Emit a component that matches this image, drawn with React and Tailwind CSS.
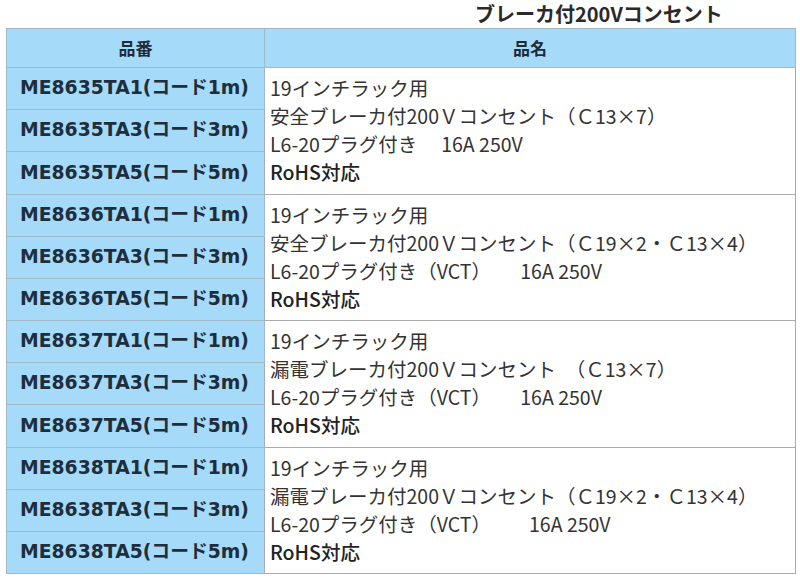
const groups = [
  {
    code: 'ME8635',
    lines: ['19インチラック用', '安全ブレーカ付200Ｖコンセント（Ｃ13×7）', 'L6-20プラグ付き　 16A 250V'],
  },
  {
    code: 'ME8636',
    lines: ['19インチラック用', '安全ブレーカ付200Ｖコンセント（Ｃ19×2・Ｃ13×4）', 'L6-20プラグ付き（VCT）　　16A 250V'],
  },
  {
    code: 'ME8637',
    lines: ['19インチラック用', '漏電ブレーカ付200Ｖコンセント　（Ｃ13×7）', 'L6-20プラグ付き（VCT）　　16A 250V'],
  },
  {
    code: 'ME8638',
    lines: ['19インチラック用', '漏電ブレーカ付200Ｖコンセント（Ｃ19×2・Ｃ13×4）', 'L6-20プラグ付き（VCT）　　  16A 250V'],
  },
]

const LEN = [1, 3, 5]

const codeFont = { fontFamily: '"DejaVu Sans", "Noto Sans CJK JP", sans-serif' }
const nameFont = { fontFamily: '"Noto Sans CJK JP", sans-serif' }

export default function App() {
  return (
    <div className="w-[800px] h-[579px] bg-white overflow-hidden">
      <div className="h-[28px] pl-[475px]">
        <h1 className="text-[20px] leading-[27px] font-bold text-[#2a2a2a]" style={nameFont}>
          ブレーカ付200Vコンセント
        </h1>
      </div>

      <table className="ml-[6px] w-[790px] border-collapse">
        <thead>
          <tr className="h-[39px] bg-[#a6daf9]">
            <th className="w-[258px] border border-[#9fb9c8] text-[17px] font-bold text-[#1c2c3a]" style={nameFont}>品番</th>
            <th className="border border-[#9fb9c8] text-[17px] font-bold text-[#1c2c3a]" style={nameFont}>品名</th>
          </tr>
        </thead>
        <tbody>
          {groups.map((g, gi) =>
            LEN.map((m, i) => (
              <tr key={g.code + m} className={i === 2 && gi % 2 === 0 ? 'h-[43px]' : 'h-[42px]'}>
                <td className="bg-[#a6daf9] border border-[#9fb9c8] pl-[13px] text-[18.8px] leading-none font-bold text-[#1e2e3c] whitespace-nowrap" style={codeFont}>
                  {g.code}TA{m}(コード{m}m)
                </td>
                {i === 0 && (
                  <td rowSpan={3} className="align-top border border-[#ababab] pl-[5px] pt-[6px] text-[19.5px] leading-[28px] text-[#333] whitespace-pre" style={nameFont}>
                    {g.lines.map(l => (
                      <div key={l}>{l}</div>
                    ))}
                    <div className="font-medium text-[#222]">RoHS対応</div>
                  </td>
                )}
              </tr>
            ))
          )}
        </tbody>
      </table>
    </div>
  )
}
